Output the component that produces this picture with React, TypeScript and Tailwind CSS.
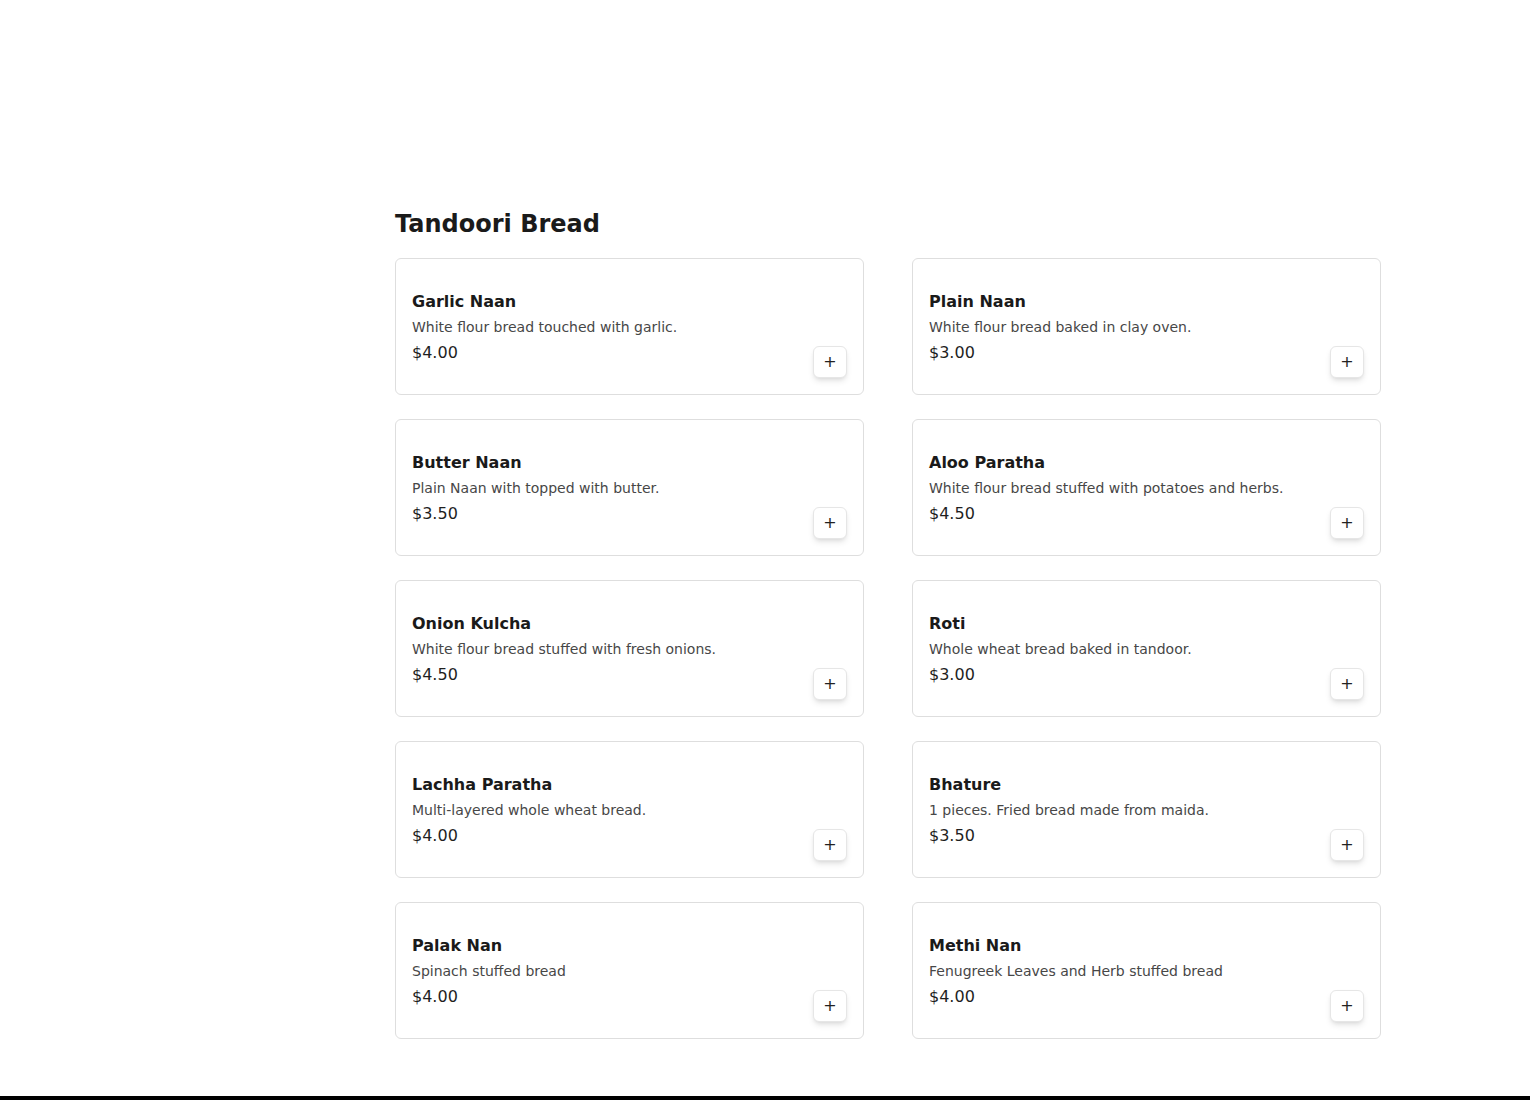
import React from 'react';

type Item = { name: string; desc: string; price: string };

const items: Item[] = [
  { name: 'Garlic Naan', desc: 'White flour bread touched with garlic.', price: '$4.00' },
  { name: 'Plain Naan', desc: 'White flour bread baked in clay oven.', price: '$3.00' },
  { name: 'Butter Naan', desc: 'Plain Naan with topped with butter.', price: '$3.50' },
  { name: 'Aloo Paratha', desc: 'White flour bread stuffed with potatoes and herbs.', price: '$4.50' },
  { name: 'Onion Kulcha', desc: 'White flour bread stuffed with fresh onions.', price: '$4.50' },
  { name: 'Roti', desc: 'Whole wheat bread baked in tandoor.', price: '$3.00' },
  { name: 'Lachha Paratha', desc: 'Multi-layered whole wheat bread.', price: '$4.00' },
  { name: 'Bhature', desc: '1 pieces. Fried bread made from maida.', price: '$3.50' },
  { name: 'Palak Nan', desc: 'Spinach stuffed bread', price: '$4.00' },
  { name: 'Methi Nan', desc: 'Fenugreek Leaves and Herb stuffed bread', price: '$4.00' },
];

function MenuCard({ item }: { item: Item }) {
  return (
    <div className="h-[137px] rounded-md border border-[#dedede] bg-white p-4 flex justify-between">
      <div className="pt-[15px]">
        <h3 className="text-base leading-6 font-bold text-[#1a1a1a]">{item.name}</h3>
        <p className="mt-[3px] text-sm leading-5 text-[#474747]">{item.desc}</p>
        <p className="mt-1 text-base leading-6 text-[#1f1f1f]">{item.price}</p>
      </div>
      <button className="self-end w-[34px] h-[32px] rounded-md border border-[#e6e6e6] bg-white shadow-md flex items-center justify-center text-[#222] text-base leading-none">
        +
      </button>
    </div>
  );
}

export default function App() {
  return (
    <div className="min-h-screen bg-white" style={{ fontFamily: '"DejaVu Sans", sans-serif' }}>
      <main className="pt-[208px] pb-[57px]">
        <div className="w-[986px] ml-[395px]">
          <h2 className="text-2xl leading-8 font-bold text-[#1a1a1a] mb-[18px]">Tandoori Bread</h2>
          <div className="grid grid-cols-2 gap-x-12 gap-y-6">
            {items.map((it) => (
              <MenuCard key={it.name} item={it} />
            ))}
          </div>
        </div>
      </main>
      <footer className="bg-black h-1" />
    </div>
  );
}
